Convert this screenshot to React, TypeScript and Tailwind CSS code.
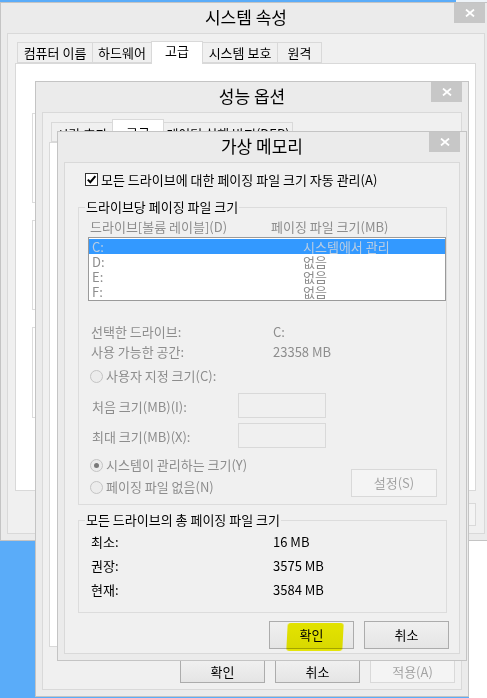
import clsx from 'clsx'
import type { ReactNode } from 'react'

const KR = "font-['Noto_Sans_CJK_KR','Noto_Sans',sans-serif]"

function CloseBtn() {
  return (
    <div className="absolute right-0 top-0 flex h-[20px] w-[31px] items-center justify-center bg-[#c7c7c7]">
      <svg width="10" height="8" viewBox="0 0 10 8">
        <path d="M1 0.5 L9 7.5 M9 0.5 L1 7.5" stroke="white" strokeWidth="1.8" />
      </svg>
    </div>
  )
}

function Win({ title, className, children }: { title: string; className: string; children: ReactNode }) {
  return (
    <div className={clsx('absolute isolate flex flex-col border border-[#c4c4c4] bg-[#ebebeb] px-[6px] pb-[6px]', className)}>
      <div className="relative flex h-[30px] shrink-0 items-center justify-center pb-[2px] text-[17px] leading-[20px] text-black">
        {title}
        <CloseBtn />
      </div>
      <div className="flex min-h-0 flex-1 flex-col border border-[#d9d9d9] bg-[#f0f0f0]">{children}</div>
    </div>
  )
}

function Btn({ children, className, disabled }: { children: ReactNode; className?: string; disabled?: boolean }) {
  return (
    <div
      className={clsx(
        'flex shrink-0 items-center justify-center border text-[13px] leading-[16px]',
        disabled
          ? 'border-[#d9d9d9] bg-[#f4f4f4] text-[#a3a3a3]'
          : 'border-[#acacac] bg-linear-to-b from-[#f0f0f0] to-[#e5e5e5] text-black',
        className
      )}
    >
      {children}
    </div>
  )
}

function Tab({ label, active, className }: { label: string; active?: boolean; className: string }) {
  return (
    <div
      className={clsx(
        'flex shrink-0 items-center justify-center border border-[#d9d9d9] text-[13px] leading-[16px] text-black',
        active ? 'relative z-10 -mb-px border-b-0 bg-white' : 'bg-[#f0f0f0]',
        className
      )}
    >
      {label}
    </div>
  )
}

function Radio({ checked }: { checked?: boolean }) {
  return (
    <div className="flex h-[13px] w-[13px] shrink-0 items-center justify-center rounded-full border border-[#c4c4c4] bg-[#ececec]">
      {checked && <div className="h-[5px] w-[5px] rounded-full bg-[#7a7a7a]" />}
    </div>
  )
}

export default function App() {
  const gray = 'text-[#8d8d8d]'
  return (
    <div className={clsx('relative h-[698px] w-[487px] overflow-hidden bg-[#5aacf9]', KR)}>
      {/* whatever sits beside the desktop */}
      <div className="absolute left-[456px] top-0 h-[3px] w-[31px] bg-[#eef3f8]" />
      <div className="absolute bottom-0 left-[469px] top-[541px] w-[18px] bg-white" />

      {/* 시스템 속성 */}
      <Win title="시스템 속성" className="left-0 top-[2px] h-[539px] w-[492px]">
        <div className="flex flex-col pl-[7px] pr-[8px] pt-[7px]">
          <div className="flex h-[22px] items-end pl-[2px]">
            <Tab label="컴퓨터 이름" className="h-[21px] w-[76px]" />
            <Tab label="하드웨어" className="-ml-px h-[21px] w-[60px]" />
            <Tab label="고급" active className="-ml-px h-[23px] w-[52px] pb-[4px]" />
            <Tab label="시스템 보호" className="-ml-px h-[21px] w-[76px]" />
            <Tab label="원격" className="-ml-px h-[21px] w-[45px]" />
          </div>
          <div className="flex h-[428px] flex-col border border-[#d9d9d9] bg-white pl-[16px] pr-[16px]">
            <div className="mt-[49px] h-[90px] border border-[#dcdcdc]" />
            <div className="mt-[17px] h-[90px] border border-[#dcdcdc]" />
            <div className="mt-[17px] h-[91px] border border-[#dcdcdc]" />
          </div>
          <div className="mt-[12px] flex justify-end gap-[6px]">
            <Btn className="h-[23px] w-[75px]">확인</Btn>
            <Btn className="h-[23px] w-[75px]">취소</Btn>
            <Btn className="h-[23px] w-[75px]" disabled>
              적용(A)
            </Btn>
          </div>
        </div>
      </Win>

      {/* 성능 옵션 */}
      <Win title="성능 옵션" className="left-[35px] top-[81px] h-[616px] w-[434px]">
        <div className="flex flex-col pl-[6px] pr-[6px] pt-[6px]">
          <div className="flex h-[23px] items-end pl-[2px]">
            <Tab label="시각 효과" className="h-[20px] w-[62px] pt-[4px]" />
            <Tab label="고급" active className="-ml-px h-[24px] w-[52px] pt-[2px]" />
            <Tab label="데이터 실행 방지(DEP)" className="-ml-px h-[20px] w-[130px] pt-[4px]" />
          </div>
          <div className="h-[505px] border border-[#d9d9d9] bg-white" />
          <div className="mt-[13px] flex justify-end gap-[10px]">
            <Btn className="h-[23px] w-[85px]">확인</Btn>
            <Btn className="h-[23px] w-[85px]">취소</Btn>
            <Btn className="h-[23px] w-[85px]" disabled>
              적용(A)
            </Btn>
          </div>
        </div>
      </Win>

      {/* 가상 메모리 */}
      <Win title="가상 메모리" className="left-[57px] top-[131px] h-[530px] w-[410px]">
        <div className="flex flex-col pl-[13px] pr-[10px] text-[13px] leading-[16px] text-black">
          <div className="ml-[7px] mt-[10px] flex h-[13px] items-center gap-[3px]">
            <div className="flex h-[13px] w-[13px] shrink-0 items-center justify-center border border-[#333] bg-white">
              <svg width="11" height="11" viewBox="0 0 11 11">
                <path d="M1.8 5.6 L4.3 8.2 L9.4 2.2" fill="none" stroke="black" strokeWidth="2" />
              </svg>
            </div>
            <span className="whitespace-nowrap">모든 드라이브에 대한 페이징 파일 크기 자동 관리(A)</span>
          </div>

          <fieldset className="mr-[2px] mt-[13px] border border-[#dcdcdc] pb-[7px]">
            <legend className="ml-[6px] px-[1px] leading-[16px]">드라이브당 페이징 파일 크기</legend>
            <div className={clsx('mt-[4px] flex h-[16px]', gray)}>
              <span className="w-[192px] pl-[11px]">드라이브[볼륨 레이블](D)</span>
              <span>페이징 파일 크기(MB)</span>
            </div>
            <div className="ml-[9px] mt-[2px] h-[64px] w-[358px] border border-[#9a9a9a] bg-white pt-[1px]">
              {[
                ['C:', '시스템에서 관리'],
                ['D:', '없음'],
                ['E:', '없음'],
                ['F:', '없음'],
              ].map(([d, s], i) => (
                <div
                  key={d}
                  className={clsx(
                    'flex h-[15px] items-center leading-[15px]',
                    i === 0 ? 'bg-[#3399ff] text-[#b9cde3]' : gray
                  )}
                >
                  <span className="w-[214px] pl-[3px]">{d}</span>
                  <span>{s}</span>
                </div>
              ))}
            </div>
            <div className={clsx('mt-[21px] flex h-[20px] items-center', gray)}>
              <span className="w-[194px] pl-[12px]">선택한 드라이브:</span>
              <span>C:</span>
            </div>
            <div className={clsx('flex h-[20px] items-center', gray)}>
              <span className="w-[194px] pl-[12px]">사용 가능한 공간:</span>
              <span>23358 MB</span>
            </div>
            <div className={clsx('mt-[4px] flex h-[20px] items-center gap-[3px] pl-[11px]', gray)}>
              <Radio />
              <span>사용자 지정 크기(C):</span>
            </div>
            <div className={clsx('mt-[7px] flex h-[25px] items-center', gray)}>
              <span className="w-[159px] pl-[13px] pt-[2px]">처음 크기(MB)(I):</span>
              <div className="h-[25px] w-[88px] border border-[#d9d9d9] bg-[#f0f0f0]" />
            </div>
            <div className={clsx('mt-[5px] flex h-[25px] items-center', gray)}>
              <span className="w-[159px] pl-[13px] pt-[2px]">최대 크기(MB)(X):</span>
              <div className="h-[25px] w-[88px] border border-[#d9d9d9] bg-[#f0f0f0]" />
            </div>
            <div className="mt-[7px] flex items-end justify-between pr-[9px]">
              <div className={clsx('flex flex-col gap-[2px] pl-[11px]', gray)}>
                <div className="flex h-[20px] items-center gap-[3px]">
                  <Radio checked />
                  <span>시스템이 관리하는 크기(Y)</span>
                </div>
                <div className="flex h-[20px] items-center gap-[3px]">
                  <Radio />
                  <span>페이징 파일 없음(N)</span>
                </div>
              </div>
              <Btn className="h-[28px] w-[86px]" disabled>
                설정(S)
              </Btn>
            </div>
          </fieldset>

          <fieldset className="mr-[2px] mt-[7px] border border-[#dcdcdc] pb-[10px]">
            <legend className="ml-[6px] px-[1px] leading-[16px]">모든 드라이브의 총 페이징 파일 크기</legend>
            {[
              ['최소:', '16 MB'],
              ['권장:', '3575 MB'],
              ['현재:', '3584 MB'],
            ].map(([k, v], i) => (
              <div key={k} className={clsx('flex h-[24px] items-center', i === 0 && 'mt-[2px]')}>
                <span className="w-[194px] pl-[12px]">{k}</span>
                <span>{v}</span>
              </div>
            ))}
          </fieldset>

          <div className="mt-[8px] flex justify-end gap-[10px]">
            <Btn className="h-[28px] w-[85px]">확인</Btn>
            <Btn className="h-[28px] w-[85px]">취소</Btn>
          </div>
        </div>
      </Win>

      {/* highlighter mark */}
      <div className="absolute left-[287px] top-[623px] h-[28px] w-[56px] -skew-x-3 rounded-[3px] bg-[#f2f200] mix-blend-multiply blur-[0.6px]" />
    </div>
  )
}
